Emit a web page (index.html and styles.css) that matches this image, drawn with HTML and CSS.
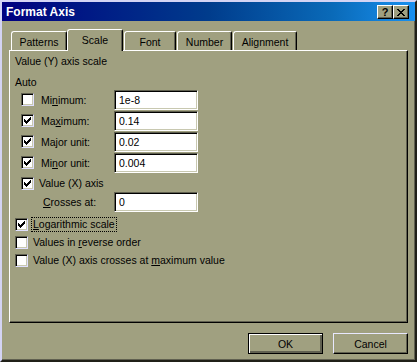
FILE: index.html
```html
<!DOCTYPE html>
<html lang="en">
<head>
  <meta charset="UTF-8">
  <title>Format Axis</title>
  <link rel="stylesheet" href="styles.css">
</head>
<body>
  <div class="window">
    <div class="titlebar">
      <span class="title">Format Axis</span>
      <div class="caption-buttons">
        <span class="cap-btn help">?</span>
        <span class="cap-btn close">
          <svg width="8" height="7" viewBox="0 0 8 7" shape-rendering="crispEdges"><path d="M0 0h2v1H0z M6 0h2v1H6z M1 1h2v1H1z M5 1h2v1H5z M2 2h4v1H2z M3 3h2v1H3z M2 4h4v1H2z M1 5h2v1H1z M5 5h2v1H5z M0 6h2v1H0z M6 6h2v1H6z" fill="#000"/></svg>
        </span>
      </div>
    </div>

    <div class="content">
      <div class="tabs">
        <div class="tab tab-patterns">Patterns</div>
        <div class="tab tab-scale active">Scale</div>
        <div class="tab tab-font">Font</div>
        <div class="tab tab-number">Number</div>
        <div class="tab tab-align">Alignment</div>
      </div>

      <div class="panel">
        <div class="heading">Value (Y) axis scale</div>
        <div class="auto">Auto</div>

        <div class="field">
          <span class="check"></span>
          <span class="label">Mi<u>n</u>imum:</span>
          <span class="input">1e-8</span>
        </div>
        <div class="field">
          <span class="check checked"><svg width="7" height="7" viewBox="0 0 7 7" shape-rendering="crispEdges"><path d="M0 2h1v3H0z M1 3h1v3H1z M2 4h1v3H2z M3 3h1v3H3z M4 2h1v3H4z M5 1h1v3H5z M6 0h1v3H6z" fill="#000"/></svg></span>
          <span class="label">Ma<u>x</u>imum:</span>
          <span class="input">0.14</span>
        </div>
        <div class="field">
          <span class="check checked"><svg width="7" height="7" viewBox="0 0 7 7" shape-rendering="crispEdges"><path d="M0 2h1v3H0z M1 3h1v3H1z M2 4h1v3H2z M3 3h1v3H3z M4 2h1v3H4z M5 1h1v3H5z M6 0h1v3H6z" fill="#000"/></svg></span>
          <span class="label">Ma<u>j</u>or unit:</span>
          <span class="input">0.02</span>
        </div>
        <div class="field">
          <span class="check checked"><svg width="7" height="7" viewBox="0 0 7 7" shape-rendering="crispEdges"><path d="M0 2h1v3H0z M1 3h1v3H1z M2 4h1v3H2z M3 3h1v3H3z M4 2h1v3H4z M5 1h1v3H5z M6 0h1v3H6z" fill="#000"/></svg></span>
          <span class="label">Mi<u>n</u>or unit:</span>
          <span class="input">0.004</span>
        </div>

        <div class="option indented">
          <span class="check checked"><svg width="7" height="7" viewBox="0 0 7 7" shape-rendering="crispEdges"><path d="M0 2h1v3H0z M1 3h1v3H1z M2 4h1v3H2z M3 3h1v3H3z M4 2h1v3H4z M5 1h1v3H5z M6 0h1v3H6z" fill="#000"/></svg></span>
          <span class="text">Value (X) axis</span>
        </div>
        <div class="crosses">
          <span class="label"><u>C</u>rosses at:</span>
          <span class="input">0</span>
        </div>

        <div class="option first">
          <span class="check checked"><svg width="7" height="7" viewBox="0 0 7 7" shape-rendering="crispEdges"><path d="M0 2h1v3H0z M1 3h1v3H1z M2 4h1v3H2z M3 3h1v3H3z M4 2h1v3H4z M5 1h1v3H5z M6 0h1v3H6z" fill="#000"/></svg></span>
          <span class="text focus"><u>L</u>ogarithmic scale</span>
        </div>
        <div class="option">
          <span class="check"></span>
          <span class="text">Values in <u>r</u>everse order</span>
        </div>
        <div class="option">
          <span class="check"></span>
          <span class="text">Value (X) axis crosses at <u>m</u>aximum value</span>
        </div>
      </div>

      <div class="buttons">
        <button class="btn default" type="button">OK</button>
        <button class="btn" type="button">Cancel</button>
      </div>
    </div>
  </div>
</body>
</html>
```

FILE: styles.css
```css
body {
  margin: 0;
  background: #a0a080;
  font-family: 'Liberation Sans', Arial, sans-serif;
  font-size: 10.5px;
  color: #000;
}

.window {
  width: 417px;
  height: 362px;
  box-sizing: border-box;
  border: 2px solid;
  border-color: #d4d4f4 #202018 #202018 #d4d4f4;
  box-shadow: inset -1px -1px 0 #606050;
  background: #a0a080;
}

/* title bar */
.titlebar {
  height: 19px;
  display: flex;
  align-items: center;
  justify-content: space-between;
  padding: 0 6px 0 4px;
  background: linear-gradient(90deg, #000080 0%, #003c8c 50%, #0a6ab8 80%, #1890f0 100%);
}

.title {
  color: #fff;
  font-weight: bold;
  font-size: 12px;
}

.caption-buttons {
  display: flex;
  margin-top: 1px;
}

.cap-btn {
  width: 16px;
  height: 14px;
  box-sizing: border-box;
  display: flex;
  align-items: center;
  justify-content: center;
  background: #a0a080;
  border: 1px solid;
  border-color: #fff #000 #000 #fff;
  box-shadow: inset -1px -1px 0 #606050;
}

.help {
  font-weight: bold;
  font-size: 11px;
  line-height: 1;
}

/* tabs */
.content {
  padding: 8px 7px 0;
}

.tabs {
  display: flex;
  align-items: flex-end;
  height: 21px;
}

.tab {
  box-sizing: border-box;
  height: 19px;
  padding-top: 4px;
  text-align: center;
  border-top: 1px solid #fff;
  border-left: 1px solid #fff;
  border-right: 1px solid #000;
  border-top-left-radius: 3px;
  border-top-right-radius: 2px;
  box-shadow: inset -1px 0 0 #606050;
}

.tab-patterns { width: 56px; margin-left: 2px; }
.tab-font { width: 52px; margin-left: 1px; }
.tab-number { width: 55px; margin-left: 1px; }
.tab-align { width: 64px; margin-left: 1px; }

.tab.active {
  width: 56px;
  height: 22px;
  padding-top: 4px;
  margin-bottom: -1px;
  position: relative;
  z-index: 1;
  background: #a0a080;
}

/* panel */
.panel {
  box-sizing: border-box;
  height: 273px;
  padding: 4px 5px 0;
  border: 1px solid;
  border-color: #fff #000 #000 #fff;
  box-shadow: inset -1px -1px 0 #606050;
}

.heading {
  line-height: 13px;
}

.auto {
  line-height: 13px;
  margin-top: 8px;
}

.field {
  display: flex;
  align-items: center;
  height: 21px;
  margin-left: 6px;
}

.field .label {
  width: 73px;
  margin-left: 7px;
}

.check {
  width: 13px;
  height: 13px;
  flex: none;
  box-sizing: border-box;
  display: flex;
  align-items: center;
  justify-content: center;
  background: #fff;
  border: 1px solid;
  border-color: #606050 #e0e0ff #e0e0ff #606050;
  box-shadow: inset 1px 1px 0 #000, inset -1px -1px 0 #c8c8b0;
}

.input {
  width: 84px;
  height: 20px;
  box-sizing: border-box;
  padding: 3px 0 0 4px;
  background: #fff;
  border: 1px solid;
  border-color: #606050 #fff #fff #606050;
  box-shadow: inset 1px 1px 0 #000, inset -1px -1px 0 #c8c8b0;
}

.option {
  display: flex;
  align-items: center;
  height: 18px;
}

.option .text {
  margin-left: 4px;
  padding: 0 1px;
  line-height: 13px;
}

.option.indented {
  margin-left: 6px;
  margin-top: 1px;
}

.option.first {
  margin-top: 3px;
}

.focus {
  outline: 1px dotted #000;
}

.crosses {
  display: flex;
  align-items: center;
  height: 20px;
  margin-left: 28px;
}

.crosses .label {
  width: 71px;
}

/* dialog buttons */
.buttons {
  display: flex;
  justify-content: flex-end;
  gap: 10px;
  margin-top: 10px;
}

.btn {
  width: 75px;
  height: 21px;
  box-sizing: border-box;
  padding: 0;
  font: inherit;
  background: #a0a080;
  border: 1px solid;
  border-color: #e8e8ff #000 #000 #e8e8ff;
  box-shadow: inset -1px -1px 0 #606050;
}

.btn.default {
  border-color: #000;
  box-shadow: inset 1px 1px 0 #fff, inset -2px -2px 0 #606050;
}
```
